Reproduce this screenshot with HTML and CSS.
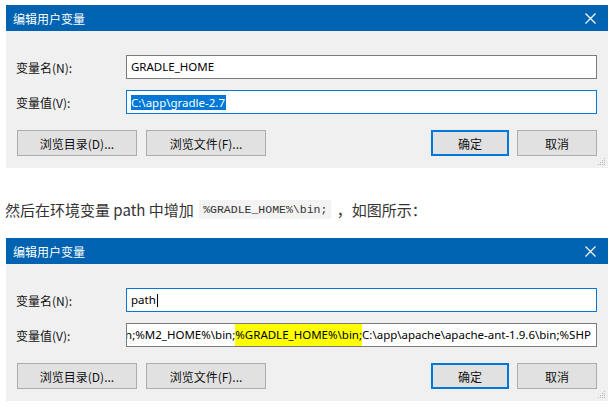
FILE: index.html
```html
<!DOCTYPE html>
<html lang="zh">
<head>
<meta charset="utf-8">
<link rel="stylesheet" href="styles.css">
</head>
<body>
<div class="dialog first">
  <div class="titlebar">
    <span class="title">编辑用户变量</span>
    <svg class="close" width="11" height="11" viewBox="0 0 11 11"><path d="M0.5 0.5 L10.5 10.5 M10.5 0.5 L0.5 10.5" stroke="#fff" stroke-width="1.2" fill="none"/></svg>
  </div>
  <div class="body">
    <div class="row">
      <label class="label">变量名(N):</label>
      <div class="field">GRADLE_HOME</div>
    </div>
    <div class="row">
      <label class="label">变量值(V):</label>
      <div class="field focus"><span class="sel">C:\app\gradle-2.7</span></div>
    </div>
    <div class="buttons">
      <div class="btn wide">浏览目录(D)...</div>
      <div class="btn wide">浏览文件(F)...</div>
      <div class="spacer"></div>
      <div class="btn ok">确定</div>
      <div class="btn cancel">取消</div>
    </div>
    <svg class="grip" width="8" height="8" viewBox="0 0 8 8"><g fill="#b8b8b8"><rect x="6" y="0" width="1" height="1"/><rect x="4" y="2" width="1" height="1"/><rect x="6" y="2" width="1" height="1"/><rect x="2" y="4" width="1" height="1"/><rect x="4" y="4" width="1" height="1"/><rect x="6" y="4" width="1" height="1"/><rect x="0" y="6" width="1" height="1"/><rect x="2" y="6" width="1" height="1"/><rect x="4" y="6" width="1" height="1"/><rect x="6" y="6" width="1" height="1"/></g></svg>
  </div>
</div>

<p class="para">然后在环境变量 path 中增加 <code class="code">%GRADLE_HOME%\bin;</code> ，如图所示：</p>

<div class="dialog second">
  <div class="titlebar">
    <span class="title">编辑用户变量</span>
    <svg class="close" width="11" height="11" viewBox="0 0 11 11"><path d="M0.5 0.5 L10.5 10.5 M10.5 0.5 L0.5 10.5" stroke="#fff" stroke-width="1.2" fill="none"/></svg>
  </div>
  <div class="body">
    <div class="row">
      <label class="label">变量名(N):</label>
      <div class="field focus">path<span class="caret"></span></div>
    </div>
    <div class="row">
      <label class="label">变量值(V):</label>
      <div class="field clip"><span class="scroll">bin;%M2_HOME%\bin;<span class="hl">%GRADLE_HOME%\bin;</span>C:\app\apache\apache-ant-1.9.6\bin;%SHP</span></div>
    </div>
    <div class="buttons">
      <div class="btn wide">浏览目录(D)...</div>
      <div class="btn wide">浏览文件(F)...</div>
      <div class="spacer"></div>
      <div class="btn ok">确定</div>
      <div class="btn cancel">取消</div>
    </div>
    <svg class="grip" width="8" height="8" viewBox="0 0 8 8"><g fill="#b8b8b8"><rect x="6" y="0" width="1" height="1"/><rect x="4" y="2" width="1" height="1"/><rect x="6" y="2" width="1" height="1"/><rect x="2" y="4" width="1" height="1"/><rect x="4" y="4" width="1" height="1"/><rect x="6" y="4" width="1" height="1"/><rect x="0" y="6" width="1" height="1"/><rect x="2" y="6" width="1" height="1"/><rect x="4" y="6" width="1" height="1"/><rect x="6" y="6" width="1" height="1"/></g></svg>
  </div>
</div>
</body>
</html>
```
FILE: styles.css
```css
html, body {
  margin: 0;
  padding: 0;
  background: #fff;
}
body {
  width: 616px;
  height: 414px;
  overflow: hidden;
  font-family: "Noto Sans", "Noto Sans CJK SC", sans-serif;
}
.dialog {
  width: 602px;
  margin-left: 6px;
  background: #f0f0f0;
}
.first {
  margin-top: 5px;
}
.titlebar {
  height: 26px;
  background: #0063b1;
  display: flex;
  align-items: center;
  padding: 0 9px 0 7px;
}
.title {
  flex: 1;
  color: #fff;
  font-size: 12px;
  font-family: "Noto Sans CJK SC", sans-serif;
}
.close {
  display: block;
  margin-right: 3px;
}
.body {
  position: relative;
  padding: 24px 11px 12px 10px;
}
.row {
  display: flex;
  align-items: center;
  margin-bottom: 11px;
}
.label {
  width: 110px;
  font-size: 12px;
  color: #111;
  font-family: "Noto Sans CJK SC", sans-serif;
}
.field {
  flex: 1;
  height: 24px;
  box-sizing: border-box;
  border: 1px solid #7a7a7a;
  background: #fff;
  padding: 0 4px;
  font-size: 11.5px;
  line-height: 22px;
  color: #000;
  white-space: nowrap;
  display: flex;
  align-items: center;
}
.field.focus {
  border-color: #0078d7;
}
.sel {
  background: #0078d7;
  color: #fff;
  line-height: 15px;
  padding: 0 1px 0 0;
}
.caret {
  display: inline-block;
  width: 1px;
  height: 13px;
  background: #000;
  margin-left: 1px;
}
.clip {
  overflow: hidden;
  align-items: stretch;
  padding: 0;
}
.scroll {
  margin-left: -12px;
  line-height: 22px;
}
.hl {
  background: #ffff00;
  display: inline-block;
  height: 22px;
}
.buttons {
  display: flex;
  gap: 9px;
  margin-top: 16px;
  padding-left: 1px;
}
.spacer {
  flex: 1;
}
.btn {
  height: 26px;
  box-sizing: border-box;
  border: 1px solid #adadad;
  background: #e1e1e1;
  font-size: 12px;
  font-family: "Noto Sans CJK SC", sans-serif;
  color: #111;
  display: flex;
  align-items: center;
  justify-content: center;
}
.wide {
  width: 120px;
}
.ok {
  width: 78px;
  border: 2px solid #0078d7;
}
.cancel {
  width: 80px;
  margin-left: -1px;
}
.grip {
  position: absolute;
  right: 2px;
  bottom: 2px;
}
.para {
  margin: 0;
  height: 58px;
  padding-top: 12px;
  display: flex;
  align-items: center;
  padding-left: 5px;
  font-size: 15px;
  color: #333;
  font-family: "Noto Sans CJK SC", sans-serif;
  white-space: pre;
}
.code {
  font-family: "Liberation Mono", monospace;
  font-size: 11.5px;
  line-height: 13px;
  background: #f3f3f3;
  color: #333;
  padding: 3px 4px;
  margin: 0 2px 0 2px;
}
```
